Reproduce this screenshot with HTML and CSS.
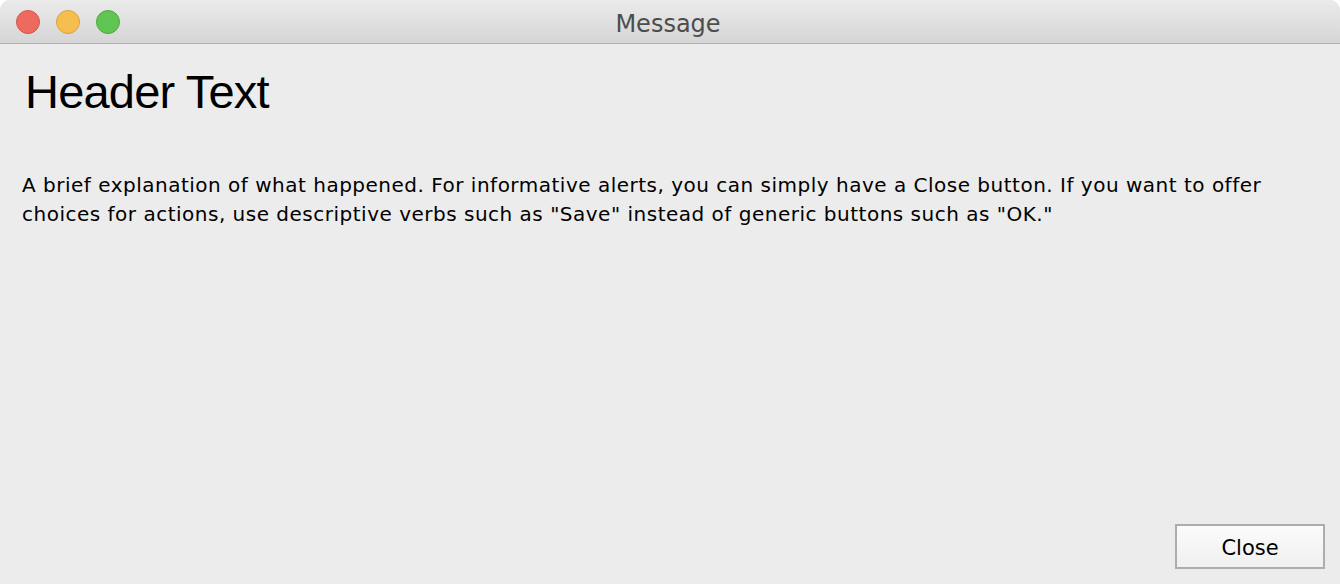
FILE: index.html
```html
<!DOCTYPE html>
<html>
<head>
<meta charset="utf-8">
<link rel="stylesheet" href="styles.css">
</head>
<body>
<div class="window">
  <div class="titlebar">
    <div class="lights">
      <span class="light red"></span>
      <span class="light yellow"></span>
      <span class="light green"></span>
    </div>
    <div class="title">Message</div>
  </div>
  <div class="content">
    <h1 class="header">Header Text</h1>
    <p class="message">A brief explanation of what happened. For informative alerts, you can simply have a Close button. If you want to offer choices for actions, use descriptive verbs such as "Save" instead of generic buttons such as "OK."</p>
    <div class="actions">
      <button class="btn">Close</button>
    </div>
  </div>
</div>
</body>
</html>
```

FILE: styles.css
```css
html, body {
  margin: 0;
  padding: 0;
  background: #ffffff;
}
body {
  font-family: "DejaVu Sans", "Liberation Sans", sans-serif;
}
.window {
  width: 1340px;
  height: 584px;
  display: flex;
  flex-direction: column;
  background: #ececec;
  border-radius: 10px 10px 0 0;
  overflow: hidden;
}
.titlebar {
  position: relative;
  height: 43px;
  flex: none;
  background: linear-gradient(#ebebeb, #d5d5d5);
  border-bottom: 1px solid #b1b1b1;
  display: flex;
  align-items: center;
  justify-content: center;
}
.lights {
  position: absolute;
  left: 16px;
  top: 10px;
  display: flex;
  gap: 16px;
}
.light {
  width: 24px;
  height: 24px;
  border-radius: 50%;
  box-sizing: border-box;
}
.red { background: #ed6a5e; border: 1px solid #d4554a; }
.yellow { background: #f6be4f; border: 1px solid #d9a23c; }
.green { background: #61c554; border: 1px solid #4ea940; }
.title {
  font-family: "DejaVu Sans", sans-serif;
  font-size: 24px;
  color: #4d4d4d;
  margin-top: 5px;
  margin-right: 4px;
}
.content {
  flex: 1;
  display: flex;
  flex-direction: column;
  padding: 0 15px 15px 22px;
}
.header {
  margin: 22px 0 0 3px;
  font-family: "Liberation Sans", Arial, sans-serif;
  font-weight: normal;
  font-size: 47px;
  letter-spacing: -0.8px;
  line-height: 52px;
  color: #000;
}
.message {
  margin: 53px 0 0 0;
  font-family: "DejaVu Sans", sans-serif;
  font-size: 20px;
  letter-spacing: 0.5px;
  line-height: 29px;
  color: #000;
  max-width: 1250px;
}
.actions {
  margin-top: auto;
  display: flex;
  justify-content: flex-end;
}
.btn {
  width: 150px;
  height: 45px;
  border: 2px solid #adadad;
  background: linear-gradient(#fbfbfb, #f0f0f0);
  font-family: "DejaVu Sans", sans-serif;
  font-size: 21px;
  color: #000;
  padding: 3px 0 0 0;
}
```
